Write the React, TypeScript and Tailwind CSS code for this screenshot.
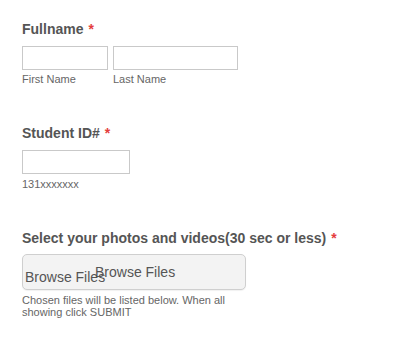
import React from "react";

const Req = () => <span className="text-[#e43d3d] ml-[5px]">*</span>;

export default function App() {
  return (
    <div
      className="w-[416px] h-[349px] bg-white pl-[22px] text-[#555]"
      style={{ fontFamily: '"Liberation Sans", Arial, sans-serif' }}
    >
      <div className="pt-[20px]">
        <div className="text-[14px] leading-[18px] font-bold text-[#555]">
          Fullname<Req />
        </div>
        <div className="flex gap-[5px] mt-[8px]">
          <div className="flex flex-col">
            <div className="w-[86px] h-[24px] border border-[#c9c9c9] bg-white" />
            <div className="mt-[3px] text-[11px] leading-[13px] text-[#666]">First Name</div>
          </div>
          <div className="flex flex-col">
            <div className="w-[125px] h-[24px] border border-[#c9c9c9] bg-white" />
            <div className="mt-[3px] text-[11px] leading-[13px] text-[#666]">Last Name</div>
          </div>
        </div>
      </div>

      <div className="mt-[38px]">
        <div className="text-[14px] leading-[18px] font-bold text-[#555]">
          Student ID#<Req />
        </div>
        <div className="w-[108px] h-[24px] border border-[#c9c9c9] bg-white mt-[8px]" />
        <div className="mt-[4px] text-[11px] leading-[13px] text-[#666]">131xxxxxxx</div>
      </div>

      <div className="mt-[38px]">
        <div className="text-[14px] leading-[18px] font-bold text-[#555]">
          Select your photos and videos(30 sec or less)<Req />
        </div>
        <div className="relative w-[224px] h-[36px] mt-[7px] rounded-[5px] border border-[#cfcfcf] bg-[#f3f3f3] shadow-[0_1px_1px_rgba(0,0,0,0.06)]">
          <div className="absolute left-[2px] top-[14px] text-[14px] leading-[16px] text-[#555]">
            Browse Files
          </div>
          <div className="absolute left-[72px] top-[9px] text-[14px] leading-[16px] text-[#555]">
            Browse Files
          </div>
        </div>
        <div className="mt-[4px] w-[215px] text-[11px] leading-[12px] text-[#666]">
          Chosen files will be listed below. When all showing click SUBMIT
        </div>
      </div>
    </div>
  );
}
